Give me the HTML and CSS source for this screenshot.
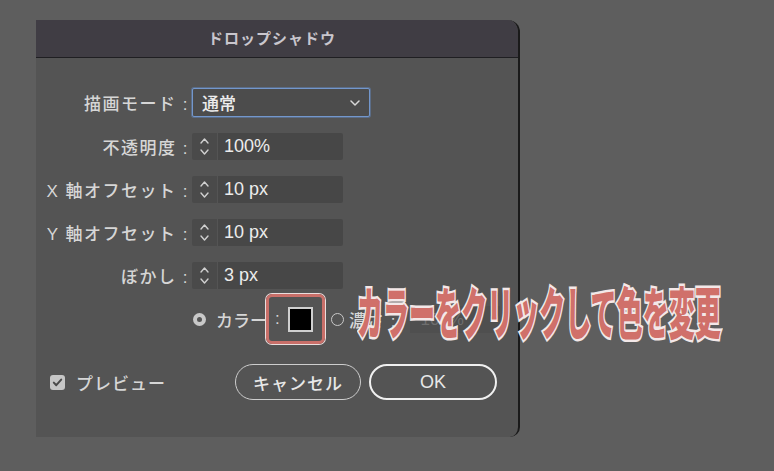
FILE: index.html
```html
<!DOCTYPE html>
<html lang="ja">
<head>
<meta charset="utf-8">
<title>ドロップシャドウ</title>
<link rel="stylesheet" href="styles.css">
</head>
<body>
<div class="stage">
  <div class="dialog">
    <div class="titlebar">ドロップシャドウ</div>
    <div class="content">
      <div class="form">
        <div class="lbl">描画モード :</div>
        <div class="select">
          <span>通常</span>
          <svg class="chev" width="10" height="6" viewBox="0 0 10 6"><path d="M1 1 L5 5 L9 1" fill="none" stroke="#d8d8d8" stroke-width="1.5" stroke-linecap="round" stroke-linejoin="round"/></svg>
        </div>

        <div class="lbl">不透明度 :</div>
        <div class="num">
          <div class="spin"><svg width="25" height="27" viewBox="0 0 25 27"><path d="M9 10 L12.5 6 L16 10 M9 17 L12.5 21 L16 17" fill="none" stroke="#d0d0d0" stroke-width="1.4" stroke-linecap="round" stroke-linejoin="round"/></svg></div>
          <div class="val">100%</div>
        </div>

        <div class="lbl">X 軸オフセット :</div>
        <div class="num">
          <div class="spin"><svg width="25" height="27" viewBox="0 0 25 27"><path d="M9 10 L12.5 6 L16 10 M9 17 L12.5 21 L16 17" fill="none" stroke="#d0d0d0" stroke-width="1.4" stroke-linecap="round" stroke-linejoin="round"/></svg></div>
          <div class="val">10 px</div>
        </div>

        <div class="lbl">Y 軸オフセット :</div>
        <div class="num">
          <div class="spin"><svg width="25" height="27" viewBox="0 0 25 27"><path d="M9 10 L12.5 6 L16 10 M9 17 L12.5 21 L16 17" fill="none" stroke="#d0d0d0" stroke-width="1.4" stroke-linecap="round" stroke-linejoin="round"/></svg></div>
          <div class="val">10 px</div>
        </div>

        <div class="lbl">ぼかし :</div>
        <div class="num">
          <div class="spin"><svg width="25" height="27" viewBox="0 0 25 27"><path d="M9 10 L12.5 6 L16 10 M9 17 L12.5 21 L16 17" fill="none" stroke="#d0d0d0" stroke-width="1.4" stroke-linecap="round" stroke-linejoin="round"/></svg></div>
          <div class="val">3 px</div>
        </div>

        <div class="spacer"></div>
        <div class="color-row">
          <span class="radio on"></span>
          <span class="clabel">カラー</span>
          <span class="hilite">
            <span class="colon">:</span>
            <span class="swatch"></span>
          </span>
          <span class="radio"></span>
          <span class="clabel dim">濃さ :</span>
          <span class="dfield">100%</span>
        </div>
      </div>

      <div class="footer">
        <span class="check"><svg width="15" height="15" viewBox="0 0 15 15"><path d="M3.8 7.6 L6.3 10.2 L11.2 4.6" fill="none" stroke="#4a4a4a" stroke-width="2" stroke-linecap="round" stroke-linejoin="round"/></svg></span>
        <span class="plabel">プレビュー</span>
        <div class="buttons">
          <button class="btn cancel">キャンセル</button>
          <button class="btn ok">OK</button>
        </div>
      </div>
    </div>
  </div>
  <div class="note">カラーをクリックして色を変更</div>
</div>
</body>
</html>
```

FILE: styles.css
```css
html, body {
  margin: 0;
  padding: 0;
  background: #5e5e5e;
}

body {
  font-family: "Liberation Sans", "Noto Sans CJK JP", sans-serif;
  color: #d4d4d4;
}

.stage {
  position: relative;
  width: 774px;
  height: 471px;
  box-sizing: border-box;
  padding: 20px 0 0 36px;
  overflow: hidden;
}

.dialog {
  width: 484px;
  height: 417px;
  box-sizing: border-box;
  background: #545454;
  border-right: 2px solid #1a1a1a;
  border-radius: 0 12px 10px 0;
  overflow: hidden;
  display: flex;
  flex-direction: column;
}

.titlebar {
  height: 37px;
  line-height: 37px;
  background: #403d44;
  border-bottom: 1px solid #1f1f22;
  text-align: center;
  padding-right: 10px;
  font-size: 15px;
  font-weight: bold;
  letter-spacing: 1px;
  color: #c9c6cd;
  flex: none;
}

.content {
  padding-top: 30px;
  display: flex;
  flex-direction: column;
}

.form {
  display: grid;
  grid-template-columns: 153px 1fr;
  column-gap: 3px;
  row-gap: 16px;
  align-items: center;
}

.lbl {
  text-align: right;
  font-size: 17px;
  font-weight: 500;
  letter-spacing: 1.5px;
  color: #d6d6d6;
  white-space: nowrap;
}

.select {
  width: 178px;
  height: 29px;
  box-sizing: border-box;
  background: #4c4c4c;
  border: 1px solid #7397cc;
  box-shadow: 0 0 0 1px rgba(100, 140, 200, 0.45);
  border-radius: 2px;
  display: flex;
  align-items: center;
  justify-content: space-between;
  padding: 0 9px 0 9px;
  font-size: 17px;
  font-weight: 500;
  color: #ececec;
}

.chev {
  display: block;
}

.num {
  display: flex;
  gap: 1px;
  height: 27px;
}

.spin {
  width: 25px;
  height: 27px;
  background: #4a4a4a;
  border-radius: 2px 0 0 2px;
}

.spin svg {
  display: block;
}

.val {
  width: 125px;
  height: 27px;
  box-sizing: border-box;
  background: #474747;
  border-radius: 0 2px 2px 0;
  padding-left: 6px;
  line-height: 27px;
  font-size: 18px;
  color: #ececec;
}

.color-row {
  display: flex;
  align-items: center;
  height: 27px;
  margin-top: 1px;
}

.radio {
  width: 13px;
  height: 13px;
  box-sizing: border-box;
  border-radius: 50%;
  border: 1.5px solid #c9c9c9;
  margin-left: 1px;
  flex: none;
}

.radio.on {
  background: #c9c9c9;
  border: none;
  display: flex;
  align-items: center;
  justify-content: center;
}

.radio.on::after {
  content: "";
  width: 5px;
  height: 5px;
  border-radius: 50%;
  background: #555;
}

.clabel {
  margin-left: 10px;
  font-size: 17px;
  font-weight: 500;
  color: #d6d6d6;
  white-space: nowrap;
}

.clabel.dim {
  margin-left: 5px;
  letter-spacing: 1px;
}

.hilite {
  margin: -12px 0 -11px -1px;
  width: 59px;
  height: 50px;
  box-sizing: border-box;
  border: 3px solid #c96f69;
  border-radius: 6px;
  box-shadow: 0 0 0 1px #e9dede;
  display: flex;
  align-items: center;
  padding-left: 6px;
  flex: none;
}

.colon {
  font-size: 17px;
  color: #d2d2d2;
}

.swatch {
  margin-left: 8px;
  width: 25px;
  height: 25px;
  box-sizing: border-box;
  border: 2px solid #cfcfcf;
  background: #000;
}

.hilite + .radio {
  margin-left: 6px;
}

.dfield {
  margin-left: 14px;
  width: 90px;
  height: 27px;
  box-sizing: border-box;
  background: #4f4f4f;
  padding-left: 10px;
  line-height: 27px;
  font-size: 17px;
  color: #6e6e6e;
}

.footer {
  margin-top: 31px;
  height: 36px;
  display: flex;
  align-items: center;
  padding: 0 21px 0 14px;
}

.check {
  width: 15px;
  height: 15px;
  background: #c6c6c6;
  border-radius: 3px;
  flex: none;
}

.check svg {
  display: block;
}

.plabel {
  margin-left: 11px;
  font-size: 17px;
  font-weight: 500;
  letter-spacing: 1px;
  color: #d6d6d6;
}

.buttons {
  margin-left: auto;
  display: flex;
  gap: 8px;
}

.btn {
  height: 36px;
  box-sizing: border-box;
  border-radius: 18px;
  background: transparent;
  font-family: "Liberation Sans", "Noto Sans CJK JP", sans-serif;
  font-size: 17px;
  font-weight: 500;
  color: #e8e8e8;
  padding: 0;
}

.cancel {
  width: 126px;
  border: 1.5px solid #cdcdcd;
  letter-spacing: 1px;
}

.ok {
  width: 128px;
  border: 2.5px solid #f0f0f0;
  font-size: 18px;
}

.note {
  position: absolute;
  left: 357px;
  top: 282px;
  font-family: "Noto Sans CJK JP", sans-serif;
  font-weight: 900;
  font-size: 56px;
  line-height: 1;
  color: #d0706a;
  -webkit-text-stroke: 5px #f3e8e8;
  paint-order: stroke fill;
  transform: scaleX(0.465);
  transform-origin: 0 0;
  white-space: nowrap;
}
```
